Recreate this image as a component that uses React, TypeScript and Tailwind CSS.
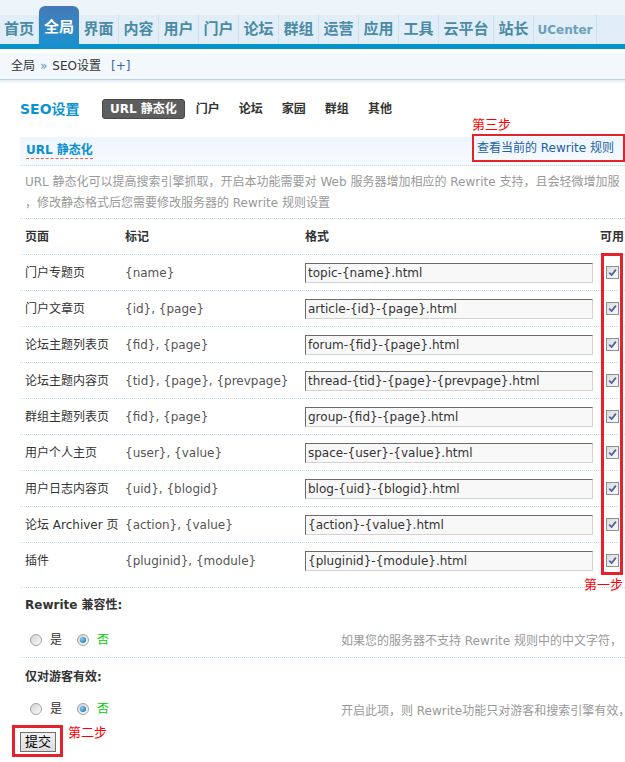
import React from "react";

const F = "font-['DejaVu_Sans','Noto_Sans_CJK_SC',sans-serif]";

const nav: { t: string; w: string }[] = [
  { t: "首页", w: "w-[39px]" },
  { t: "全局", w: "w-[40px]" },
  { t: "界面", w: "w-[40px]" },
  { t: "内容", w: "w-[40px]" },
  { t: "用户", w: "w-[40px]" },
  { t: "门户", w: "w-[40px]" },
  { t: "论坛", w: "w-[40px]" },
  { t: "群组", w: "w-[40px]" },
  { t: "运营", w: "w-[40px]" },
  { t: "应用", w: "w-[40px]" },
  { t: "工具", w: "w-[40px]" },
  { t: "云平台", w: "w-[55px]" },
  { t: "站长", w: "w-[40px]" },
  { t: "UCenter", w: "w-[63px]" },
];

const rows: [string, string, string][] = [
  ["门户专题页", "{name}", "topic-{name}.html"],
  ["门户文章页", "{id}, {page}", "article-{id}-{page}.html"],
  ["论坛主题列表页", "{fid}, {page}", "forum-{fid}-{page}.html"],
  ["论坛主题内容页", "{tid}, {page}, {prevpage}", "thread-{tid}-{page}-{prevpage}.html"],
  ["群组主题列表页", "{fid}, {page}", "group-{fid}-{page}.html"],
  ["用户个人主页", "{user}, {value}", "space-{user}-{value}.html"],
  ["用户日志内容页", "{uid}, {blogid}", "blog-{uid}-{blogid}.html"],
  ["论坛 Archiver 页", "{action}, {value}", "{action}-{value}.html"],
  ["插件", "{pluginid}, {module}", "{pluginid}-{module}.html"],
];

function Check() {
  return (
    <span className="inline-flex h-[13px] w-[13px] items-center justify-center border border-[#8e8f8f] bg-linear-to-br from-[#dadada] to-[#fbfbfb]">
      <svg width="9" height="9" viewBox="0 0 9 9">
        <path d="M1.2 4.6 L3.6 7 L7.9 1.6" stroke="#4b5d9f" strokeWidth="1.7" fill="none" />
      </svg>
    </span>
  );
}

function Radio({ checked }: { checked?: boolean }) {
  return (
    <span className="inline-flex h-[12px] w-[12px] items-center justify-center rounded-full border border-[#a3a3a3] bg-linear-to-br from-[#d2d2d2] to-[#fbfbfb]">
      {checked && (
        <span className="h-[6px] w-[6px] rounded-full bg-[radial-gradient(circle_at_35%_35%,#7fd0f6,#0f5c9e)]" />
      )}
    </span>
  );
}

function RadioRow({ h, desc }: { h: string; desc: string }) {
  return (
    <div className={`flex ${h} items-center`}>
      <div className="flex w-[321px] shrink-0 items-center pl-[10px]">
        <Radio />
        <span className="ml-[8px]">是</span>
        <span className="ml-[15px] flex items-center">
          <Radio checked />
        </span>
        <span className="ml-[8px] text-[#00cc00]">否</span>
      </div>
      <div className="whitespace-nowrap pt-[3px] text-[#999]">{desc}</div>
    </div>
  );
}

export default function App() {
  return (
    <div className={`${F} relative h-[762px] w-[625px] overflow-hidden bg-white text-[12px] text-[#333]`}>
      {/* top nav */}
      <div className="flex h-[49px] flex-col bg-[#edf5fb]">
        <div className="h-[15px]" />
        <div className="flex h-[29px] bg-[#e1eef8]">
          {nav.map((n) =>
            n.t === "全局" ? (
              <div
                key={n.t}
                className={`relative z-10 -mt-[9px] flex h-[43px] ${n.w} items-center justify-center rounded-t-[6px] bg-linear-to-b from-[#4479b8] to-[#0b93d0] text-[15px] font-bold text-white`}
              >
                {n.t}
              </div>
            ) : (
              <div
                key={n.t}
                className={`flex h-full ${n.w} items-center justify-center border-r border-[#cde0ec] font-bold ${
                  n.t === "UCenter" ? "text-[12px] text-[#6aa0b9]" : "text-[15px] text-[#4b8aa5]"
                }`}
              >
                {n.t}
              </div>
            )
          )}
        </div>
        <div className="h-[5px] bg-[#0394cc]" />
      </div>

      {/* breadcrumb */}
      <div className="mt-[4px] flex h-[27px] items-center border-b border-[#b7d1dd] bg-[#f2f8fc] pl-[11px]">
        <span>全局</span>
        <span className="mx-[5px] text-[#5f93c4]">»</span>
        <span>SEO设置</span>
        <span className="ml-[10px] text-[#3a64b0]">[+]</span>
      </div>
      <div className="h-[4px] bg-linear-to-b from-[#e4eef3] to-white" />

      {/* content */}
      <div className="ml-[20px] w-[605px]">
        <div className="mt-[15px] flex h-[20px] items-center">
          <span className="w-[82px] text-[14px] font-bold text-[#0d93d0]">SEO设置</span>
          <span className="flex h-[20px] items-center rounded-[3px] border border-[#474747] bg-[#5e5e5e] px-[7px] font-bold text-white">
            URL 静态化
          </span>
          {["门户", "论坛", "家园", "群组", "其他"].map((t, i) => (
            <span key={t} className={`${i === 0 ? "ml-[11px]" : "ml-[19px]"} font-bold`}>
              {t}
            </span>
          ))}
        </div>

        {/* section header */}
        <div className="mt-[18px] flex h-[29px] items-center border-b border-dotted border-[#c4dfee] bg-linear-to-b from-[#edf5fd] to-[#f7fbfe] pl-[6px]">
          <span className="border-b border-dashed border-[#f25a5a] font-bold leading-[15px] text-[#0b8fd0]">URL 静态化</span>
          <div className="relative ml-auto -mt-[6px] flex h-[28px] w-[153px] items-center border-2 border-[#e5222b] pl-[3px] text-[#2260a8]">
            查看当前的 Rewrite 规则
            <span className="absolute bottom-[calc(100%+4px)] left-[-2px] text-[13px] leading-[14px] text-[#ff0000]">第三步</span>
          </div>
        </div>

        {/* description */}
        <div className="overflow-hidden whitespace-nowrap border-b border-dotted border-[#c4dfee] pb-[4px] pl-[5px] pt-[6px] leading-[21px] text-[#999]">
          <div>URL 静态化可以提高搜索引擎抓取，开启本功能需要对 Web 服务器增加相应的 Rewrite 支持，且会轻微增加服</div>
          <div>，修改静态格式后您需要修改服务器的 Rewrite 规则设置</div>
        </div>

        {/* table */}
        <div className="relative">
          <div className="grid h-[36px] grid-cols-[100px_180px_295px_40px] items-center border-b border-dotted border-[#c4dfee] pl-[5px] font-bold">
            <span>页面</span>
            <span>标记</span>
            <span>格式</span>
            <span className="whitespace-nowrap">可用</span>
          </div>
          {rows.map((r, i) => (
            <div
              key={r[0]}
              className={`border-b border-dotted border-[#c4dfee] ${i === rows.length - 1 ? "pb-[9px]" : ""}`}
            >
              <div className="grid h-[35px] grid-cols-[100px_180px_295px_40px] items-center pl-[5px]">
                <span className="whitespace-nowrap">{r[0]}</span>
                <span className="whitespace-nowrap text-[#555]">{r[1]}</span>
                <input
                  readOnly
                  value={r[2]}
                  className="h-[20px] w-[288px] border border-b-[#d2d2d2] border-l-[#6b6b6b] border-r-[#d2d2d2] border-t-[#6b6b6b] bg-[#f8f8f8] px-[2px] text-[12px] text-[#333] outline-none"
                />
                <span className="flex pl-[6px]">
                  <Check />
                </span>
              </div>
            </div>
          ))}
          <div className="absolute left-[581px] top-[34px] h-[322px] w-[22px] border-[3px] border-[#e5222b]">
            <span className="absolute right-[-3px] top-[calc(100%+6px)] whitespace-nowrap text-[13px] leading-[14px] text-[#ff0000]">第一步</span>
          </div>
        </div>

        {/* Rewrite compat */}
        <div className="flex h-[34px] items-center pl-[5px] font-bold">Rewrite 兼容性:</div>
        <div className="border-b border-dotted border-[#c4dfee]">
          <RadioRow h="h-[35px]" desc="如果您的服务器不支持 Rewrite 规则中的中文字符，" />
        </div>

        <div className="flex h-[38px] items-center pl-[5px] font-bold">仅对游客有效:</div>
        <RadioRow h="h-[26px]" desc="开启此项，则 Rewrite功能只对游客和搜索引擎有效，" />

        <div className="mt-[3px] flex items-start">
          <div className="-ml-[8px] border-[3px] border-[#e5222b] pb-[2px] pl-[5px] pr-[4px] pt-[4px]">
            <button className="flex h-[20px] w-[36px] items-center justify-center border border-[#707070] bg-linear-to-b from-[#f2f2f2] to-[#dcdcdc] text-[13px] text-black">
              提交
            </button>
          </div>
          <span className="ml-[5px] mt-[1px] text-[13px] leading-[14px] text-[#ff0000]">第二步</span>
        </div>
      </div>
    </div>
  );
}
